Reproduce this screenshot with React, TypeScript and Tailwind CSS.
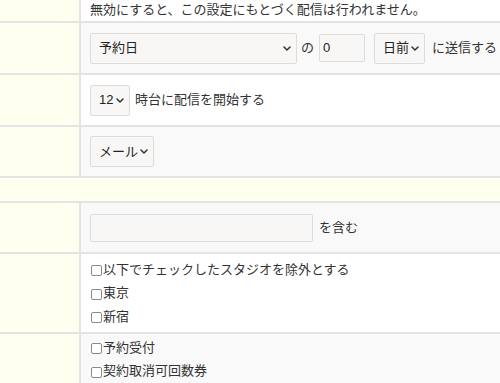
import React from "react";

const Chevron = () => (
  <svg width="8" height="5" viewBox="0 0 8 5" className="shrink-0">
    <path d="M1 1l3 3 3-3" fill="none" stroke="#333" strokeWidth="1.5" strokeLinecap="round" strokeLinejoin="round" />
  </svg>
);

function Select({ label, className }: { label: string; className: string }) {
  return (
    <div
      className={`flex h-[31px] items-center justify-between rounded-[2px] border border-[#dcdcdc] bg-[#f8f7f5] pl-[8px] pr-[5px] text-[#222] ${className}`}
    >
      <span>{label}</span>
      <Chevron />
    </div>
  );
}

function Row({ children, bg, className }: { children?: React.ReactNode; bg: string; className: string }) {
  return (
    <div className="flex border-b-2 border-[#e4e4e4]">
      <div className="w-[81px] shrink-0 border-r-2 border-[#e4e4e4] bg-[#fffff0]" />
      <div className={`flex-1 pl-[9px] ${bg} ${className}`}>{children}</div>
    </div>
  );
}

function Check({ label }: { label: string }) {
  return (
    <div className="flex h-[23.4px] items-center">
      <span className="mr-[1px] ml-[1px] mt-[2px] h-[11px] w-[11px] rounded-[2px] border border-[#8a8a8a] bg-white" />
      <span>{label}</span>
    </div>
  );
}

export default function App() {
  return (
    <div className="h-[383px] w-[500px] overflow-hidden bg-[#f9f9f9] font-['Liberation_Sans','Noto_Sans_CJK_JP',sans-serif] text-[13px] text-[#333]">
      <Row bg="bg-white" className="flex h-[21px] items-center pb-[2px] pl-[7px]">
        無効にすると、この設定にもとづく配信は行われません。
      </Row>

      <Row bg="bg-[#f9f9f9]" className="flex h-[50px] items-center">
        <Select label="予約日" className="w-[207px]" />
        <span className="ml-[4px]">の</span>
        <div className="ml-[5px] flex h-[28px] w-[46px] items-center rounded-[2px] border border-[#dcdcdc] bg-[#f8f7f5] pl-[3px] text-[#222]">
          0
        </div>
        <Select label="日前" className="ml-[9px] w-[51px]" />
        <span className="ml-[7px]">に送信する</span>
      </Row>

      <Row bg="bg-white" className="flex h-[50px] items-center">
        <Select label="12" className="w-[40px]" />
        <span className="ml-[5px]">時台に配信を開始する</span>
      </Row>

      <Row bg="bg-[#f9f9f9]" className="flex h-[49px] items-center">
        <Select label="メール" className="w-[64px]" />
      </Row>

      <div className="h-[25px] border-b-2 border-[#e4e4e4] bg-[#fffff0]" />

      <Row bg="bg-[#f9f9f9]" className="flex h-[49px] items-center">
        <div className="h-[28px] w-[223px] rounded-[2px] border border-[#dcdcdc] bg-[#f8f7f5]" />
        <span className="ml-[6px]">を含む</span>
      </Row>

      <Row bg="bg-white" className="h-[78px] pt-[4px]">
        <Check label="以下でチェックしたスタジオを除外とする" />
        <Check label="東京" />
        <Check label="新宿" />
      </Row>

      <Row bg="bg-[#f9f9f9]" className="h-[60px] pt-[2px]">
        <Check label="予約受付" />
        <Check label="契約取消可回数券" />
      </Row>
    </div>
  );
}
